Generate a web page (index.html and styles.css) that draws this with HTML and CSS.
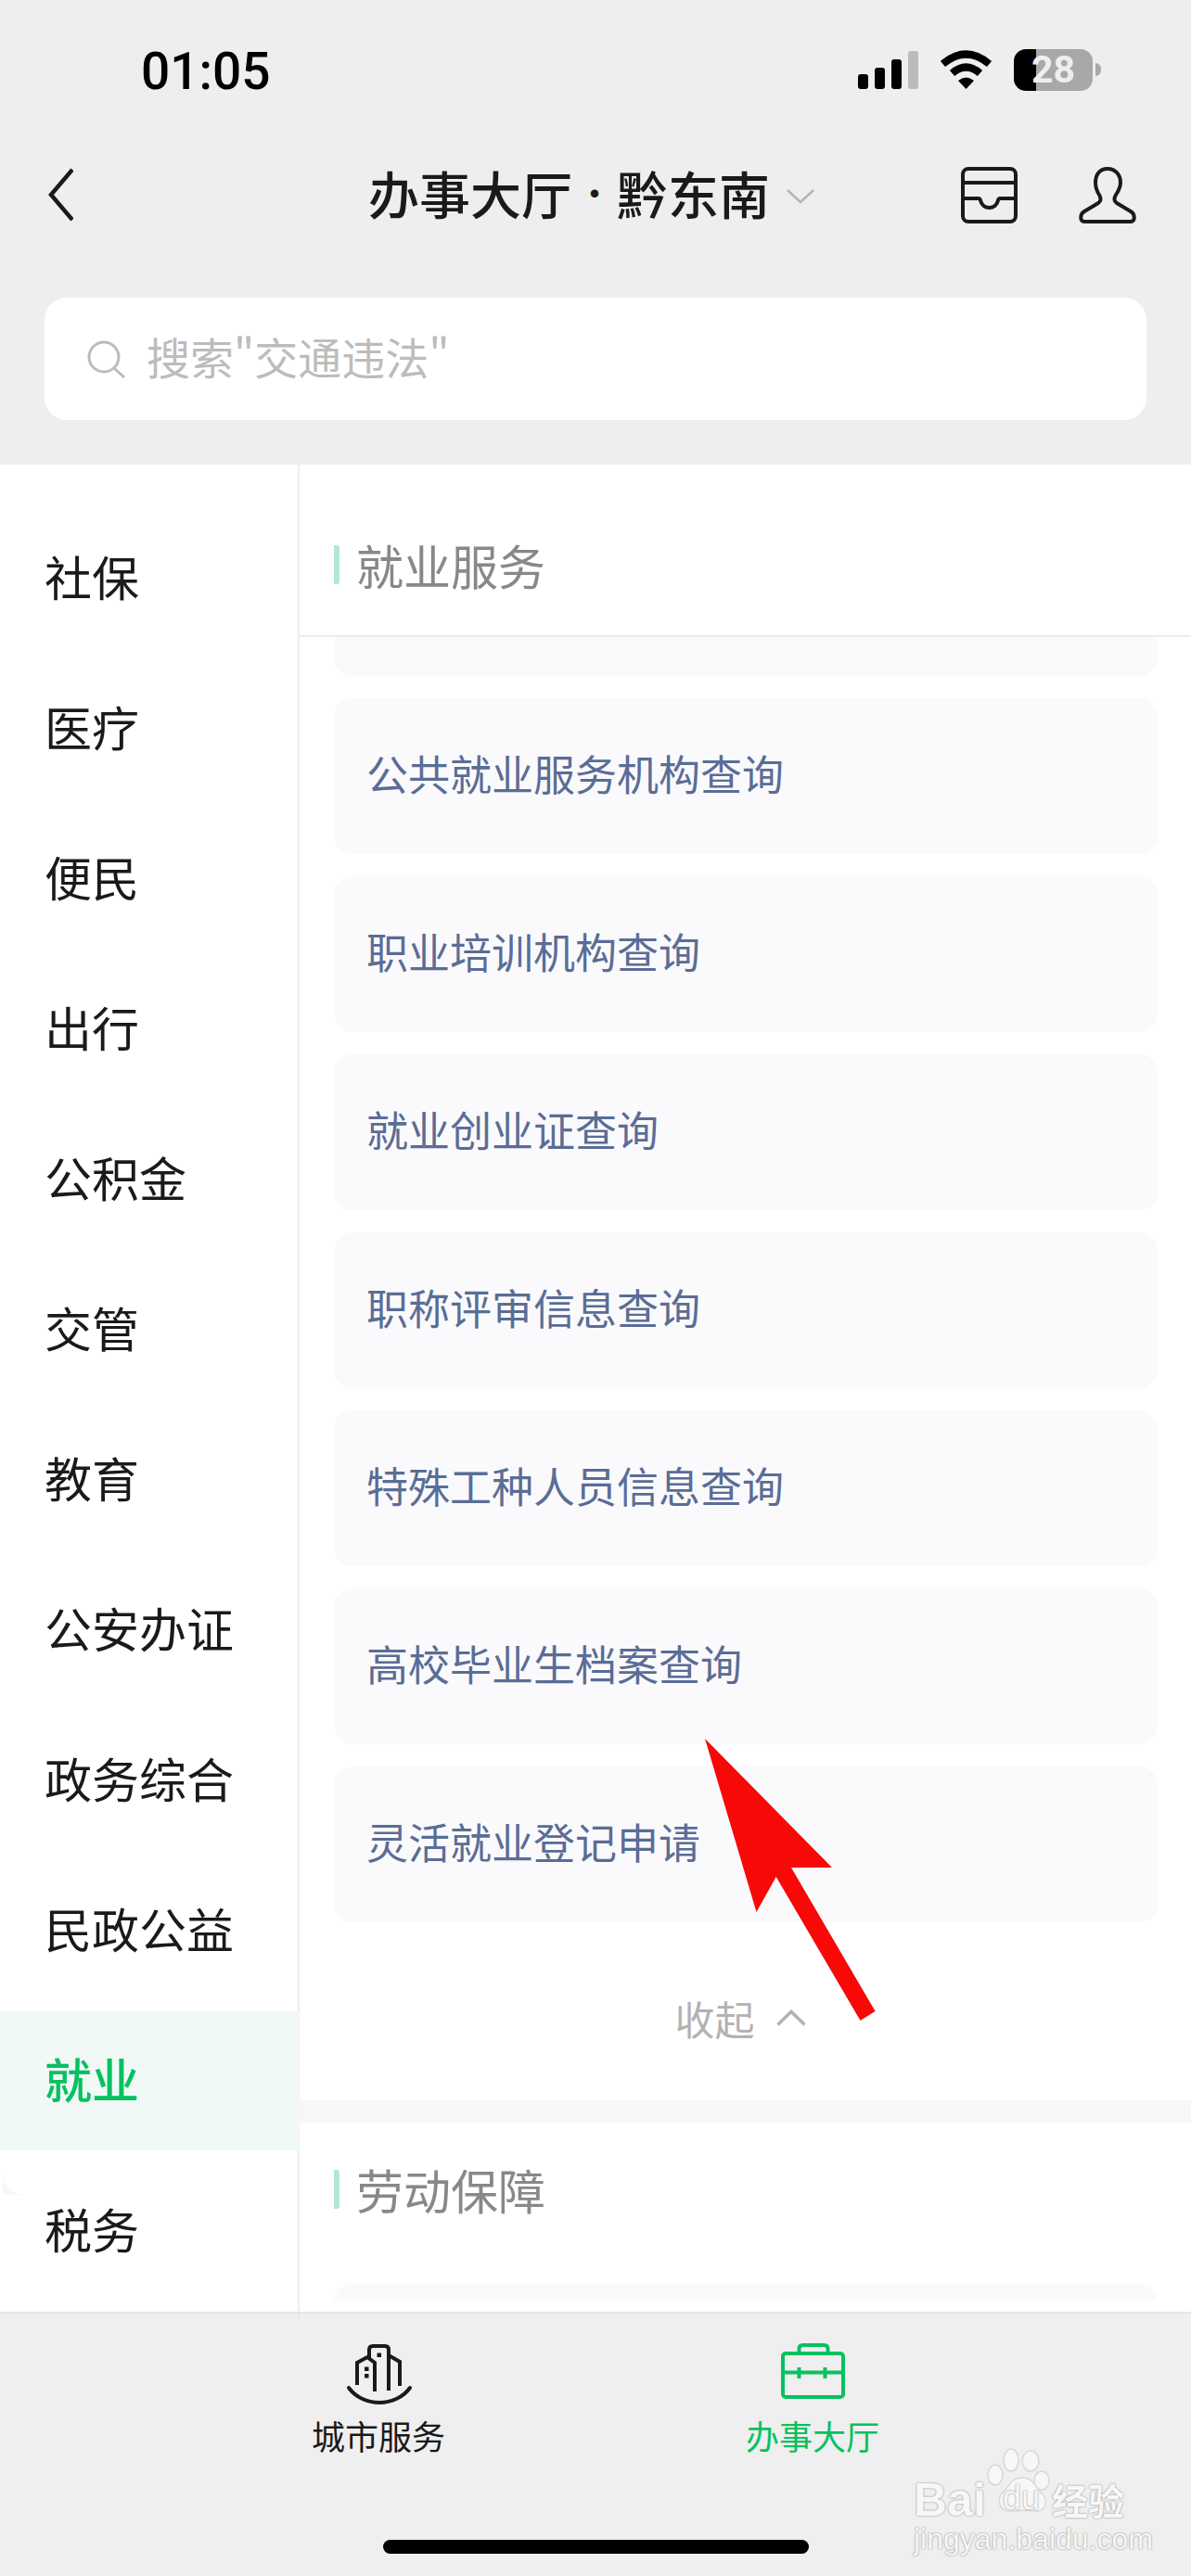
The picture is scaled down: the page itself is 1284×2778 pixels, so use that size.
FILE: index.html
```html
<!DOCTYPE html>
<html lang="zh-CN">
<head>
    <meta charset="UTF-8">
    <meta name="viewport" content="width=device-width, initial-scale=1.0">
    <title>办事大厅</title>
    <link rel="stylesheet" href="styles.css">
</head>
<body>
<div class="app">
    <header class="top">
        <div class="status">
            <span class="time">01:05</span>
            <div class="status-icons">
                <svg class="signal" width="65" height="41" viewBox="0 0 65 41">
                    <rect x="0" y="25" width="11" height="16" rx="3"/>
                    <rect x="18" y="18" width="11" height="23" rx="3"/>
                    <rect x="36" y="9" width="11" height="32" rx="3"/>
                    <rect x="54" y="0" width="11" height="41" rx="3" fill="#bbb"/>
                </svg>
                <svg class="wifi" width="57" height="42" viewBox="0 0 57 42">
                    <path d="M3.5 15 Q28.5 -6 53.5 15" fill="none" stroke="#000" stroke-width="8"/>
                    <path d="M13.5 25 Q28.5 12 43.5 25" fill="none" stroke="#000" stroke-width="8"/>
                    <path d="M28.5 42 L20 33 Q28.5 26 37 33 Z"/>
                </svg>
                <div class="battery">28</div>
            </div>
        </div>
        <nav class="nav">
            <svg class="back" width="32" height="60" viewBox="0 0 32 60">
                <path d="M31 3 L8 30 L31 57" fill="none" stroke="#1a1a1a" stroke-width="4.5"/>
            </svg>
            <div class="nav-title">
                <span>办事大厅</span><span class="dot">·</span><span>黔东南</span>
                <svg class="caret" width="30" height="16" viewBox="0 0 30 16">
                    <path d="M1 1 L15 14 L29 1" fill="none" stroke="#b5b5b5" stroke-width="2.5"/>
                </svg>
            </div>
            <div class="nav-icons">
                <svg width="61" height="61" viewBox="0 0 61 61" fill="none" stroke="#1a1a1a" stroke-width="4">
                    <rect x="2" y="2" width="57" height="57" rx="6"/>
                    <path d="M2 17 H59"/>
                    <path d="M2 34 H19 Q20.5 34 21 36 C22 41 26 44 30.5 44 C35 44 39 41 40 36 Q40.5 34 42 34 H59"/>
                </svg>
                <svg width="65" height="61" viewBox="0 0 65 61" fill="none" stroke="#1a1a1a" stroke-width="4">
                    <path d="M31 2 C22 2 18 9 18 17 C18 23 20 27 22.5 31 C24 34 24 37 21 39 L6 48 C1 51 1 59 6 59 H56 C61 59 61 51 56 48 L41 39 C38 37 38 34 39.5 31 C42 27 45 23 45 17 C45 9 40 2 31 2 Z"/>
                </svg>
            </div>
        </nav>
        <div class="search">
            <svg width="41" height="41" viewBox="0 0 41 41" fill="none" stroke="#bcbcbc" stroke-width="3">
                <circle cx="18" cy="18" r="16"/>
                <path d="M29 30 L40 40"/>
            </svg>
            <span class="search-text">搜索"交通违法"</span>
        </div>
    </header>

    <div class="content">
        <aside class="sidebar">
            <div class="side-item">社保</div>
            <div class="side-item">医疗</div>
            <div class="side-item">便民</div>
            <div class="side-item">出行</div>
            <div class="side-item">公积金</div>
            <div class="side-item">交管</div>
            <div class="side-item">教育</div>
            <div class="side-item">公安办证</div>
            <div class="side-item">政务综合</div>
            <div class="side-item">民政公益</div>
            <div class="side-item active">就业</div>
            <div class="side-item">税务</div>
        </aside>
        <main class="main">
            <div class="sec-head first"><i class="sec-bar"></i>就业服务</div>
            <div class="cards">
                <div class="card cut-top"></div>
                <div class="card">公共就业服务机构查询</div>
                <div class="card">职业培训机构查询</div>
                <div class="card">就业创业证查询</div>
                <div class="card">职称评审信息查询</div>
                <div class="card">特殊工种人员信息查询</div>
                <div class="card">高校毕业生档案查询</div>
                <div class="card">灵活就业登记申请</div>
            </div>
            <div class="collapse">
                <span>收起</span>
                <svg width="32" height="18" viewBox="0 0 32 18">
                    <path d="M1.5 16.5 L16 2.5 L30.5 16.5" fill="none" stroke="#b2b2b2" stroke-width="3.5"/>
                </svg>
            </div>
            <div class="band"></div>
            <div class="sec-head"><i class="sec-bar"></i>劳动保障</div>
            <div class="cards">
                <div class="card cut-bottom"></div>
            </div>
        </main>
    </div>

    <footer class="tabbar">
        <div class="tab">
            <svg width="120" height="100" viewBox="-3 0 120 100" fill="none" stroke="#1a1a1a" stroke-width="4">
                <path d="M34 62 V38 L45 32 L53 38 V69"/>
                <path d="M47 33 V24 Q47 20 51 20 H64 Q68 20 68 24 V68"/>
                <path d="M68 30 L80 37 V63"/>
                <path d="M25 65 C32 75 45 81 58 81 C71 81 84 75 91 65" stroke-linecap="round"/>
                <rect x="55.5" y="27.5" width="4.5" height="4.5" fill="#1a1a1a" stroke="none"/>
                <rect x="42" y="42.5" width="4.5" height="4.5" fill="#1a1a1a" stroke="none"/>
                <rect x="42" y="50" width="4.5" height="4.5" fill="#1a1a1a" stroke="none"/>
            </svg>
            <span>城市服务</span>
        </div>
        <div class="tab active">
            <svg width="120" height="100" viewBox="-4.5 0 120 100" fill="none" stroke="#07c160" stroke-width="4">
                <rect x="23.5" y="28" width="65" height="47" rx="3"/>
                <path d="M23.5 48.5 H88.5"/>
                <path d="M41 43 V55 M69 43 V55"/>
                <path d="M41 28 V23 Q41 19 45 19 H68 Q72 19 72 23 V28"/>
            </svg>
            <span>办事大厅</span>
        </div>
    </footer>
    <div class="home-bar"></div>

    <!-- red arrow drawn over the screenshot -->
    <svg class="arrow" width="184" height="304" viewBox="0 0 184 304">
        <path d="M0 0 L137 139 L93 139 L183.6 294 L167.5 304 L76.7 149 L55.5 187 Z" fill="#f90808"/>
    </svg>

    <!-- watermark -->
    <div class="mark">
        <svg class="paw" width="260" height="100" viewBox="0 0 260 100" fill="#f7f7f7" stroke="#d8d8d8" stroke-width="1.5">
            <ellipse cx="103" cy="49" rx="8" ry="11"/>
            <ellipse cx="120" cy="33" rx="8" ry="12"/>
            <ellipse cx="141" cy="34" rx="9" ry="11"/>
            <ellipse cx="153" cy="55" rx="8" ry="10"/>
            <path d="M132 52 C120 52 118 62 111 68 C105 74 106 88 118 88 C126 88 138 86 146 88 C158 89 160 76 154 70 C147 63 144 52 132 52 Z"/>
        </svg>
        <span class="mark-bai">Bai</span>
        <span class="mark-du">du</span>
        <span class="mark-cn">经验</span>
        <span class="mark-url">jingyan.baidu.com</span>
    </div>
</div>
</body>
</html>
```

FILE: styles.css
```css
* {
    box-sizing: border-box;
}
body {
    margin: 0;
    font-family: "Noto Sans CJK SC", "Liberation Sans", sans-serif;
    color: #1a1a1a;
    background-color: #fff;
}
.app {
    position: relative;
    width: 1284px;
    height: 2778px;
    overflow: hidden;
    display: flex;
    flex-direction: column;
}

/* top area */
.top {
    height: 501px;
    background-color: #eeeeee;
}
.status {
    height: 178px;
    padding: 53px 106px 0 152px;
    display: flex;
    justify-content: space-between;
    align-items: flex-start;
}
.time {
    font-family: Roboto, "Liberation Sans", sans-serif;
    font-weight: 500;
    font-size: 55px;
    line-height: 48px;
    color: #000;
}
.status-icons {
    display: flex;
    align-items: flex-start;
    gap: 23px;
}
.signal {
    margin-top: 2px;
}
.wifi {
    margin-top: 1px;
}
.battery {
    position: relative;
    width: 85px;
    height: 45px;
    border-radius: 13px;
    background: linear-gradient(90deg, #000 24px, #a8a8a8 24px);
    color: #eee;
    font-family: Roboto, "Liberation Sans", sans-serif;
    font-weight: 700;
    font-size: 41px;
    line-height: 45px;
    text-align: center;
}
.battery::after {
    content: "";
    position: absolute;
    left: 88px;
    top: 15px;
    width: 6px;
    height: 14px;
    border-radius: 0 7px 7px 0;
    background-color: #a8a8a8;
}
.nav {
    height: 64px;
    padding: 0 56px 0 47px;
    display: grid;
    grid-template-columns: 1fr auto 1fr;
    align-items: center;
}
.nav-title {
    display: flex;
    align-items: center;
    font-size: 55px;
    font-weight: 500;
    line-height: 58px;
    padding-bottom: 6px;
}
.dot {
    width: 48px;
    font-size: 40px;
    font-weight: 400;
    text-align: center;
}
.caret {
    margin-left: 18px;
    margin-top: 10px;
}
.nav-icons {
    display: flex;
    justify-content: flex-end;
    gap: 66px;
}
.search {
    height: 132px;
    margin: 79px 48px 0;
    padding-left: 46px;
    border-radius: 24px;
    background-color: #fff;
    display: flex;
    align-items: center;
    gap: 23px;
    font-size: 47px;
    color: #bcbcbc;
}
.search-text {
    line-height: 60px;
    padding-bottom: 6px;
}

/* middle */
.content {
    height: 1992px;
    display: flex;
}
.sidebar {
    position: relative;
    z-index: 1;
    width: 323px;
    padding-top: 48px;
    border-right: 2px solid #eeeeee;
    display: flex;
    flex-direction: column;
    gap: 12px;
}
.sidebar::after {
    content: "";
    position: absolute;
    right: -2px;
    bottom: -6px;
    width: 2px;
    height: 6px;
    background-color: #e4e4e4;
}
.side-item {
    position: relative;
    height: 150px;
    padding-left: 48px;
    margin-right: -2px;
    font-size: 51px;
    line-height: 145px;
}
.side-item.active {
    background-color: #f0f9f5;
    color: #07c160;
    font-weight: 500;
}
.side-item.active::before {
    content: "";
    position: absolute;
    left: 3px;
    top: 24px;
    width: 15px;
    height: 14px;
    background: radial-gradient(circle at 100% 100%, transparent 14px, #f7f7f7 15px);
}
.side-item.active::after {
    content: "";
    position: absolute;
    left: 3px;
    bottom: -48px;
    width: 22px;
    height: 22px;
    background: radial-gradient(circle at 100% 0, transparent 21px, #f7f7f7 22px);
}
.main {
    flex: 1;
    overflow: hidden;
}
.sec-head {
    display: flex;
    align-items: center;
    gap: 18px;
    height: 144px;
    padding-left: 37px;
    font-size: 51px;
    line-height: 60px;
    color: #888;
}
.sec-head.first {
    height: 186px;
    padding-top: 32px;
    border-bottom: 2px solid #ececec;
}
.sec-bar {
    width: 6px;
    height: 42px;
    border-radius: 0 3px 3px 0;
    background-color: #b2e8cf;
}
.cards {
    padding: 0 36px 0 37px;
    display: flex;
    flex-direction: column;
    gap: 24px;
}
.card {
    height: 168px;
    padding-left: 35px;
    border-radius: 20px;
    background-color: #fafafc;
    color: #5a6d96;
    font-size: 45px;
    line-height: 161px;
}
.card.cut-top {
    height: 42px;
    border-radius: 0 0 20px 20px;
}
.card.cut-bottom {
    height: 18px;
    margin-top: 30px;
    border-radius: 20px 20px 0 0;
}
.collapse {
    height: 192px;
    padding: 13px 11px 0 0;
    display: flex;
    justify-content: center;
    align-items: center;
    gap: 23px;
    font-size: 43px;
    color: #b2b2b2;
}
.band {
    height: 24px;
    background-color: #f7f7f7;
}

/* tabs */
.tabbar {
    flex: 1;
    padding-top: 15px;
    border-top: 2px solid #e5e5e5;
    background-color: #efefef;
    display: flex;
    justify-content: center;
}
.tab {
    width: 468px;
    display: flex;
    flex-direction: column;
    align-items: center;
    font-size: 36px;
    line-height: 40px;
}
.tab span {
    margin-top: -4px;
}
.tab.active {
    color: #07c160;
}
.home-bar {
    position: absolute;
    left: 413px;
    top: 2739px;
    width: 459px;
    height: 15px;
    border-radius: 8px;
    background-color: #000;
}

/* overlays */
.arrow {
    position: absolute;
    left: 760px;
    top: 1875px;
}
.mark {
    position: absolute;
    left: 970px;
    top: 2620px;
    width: 260px;
    height: 150px;
    color: #f7f7f7;
    font-family: "Liberation Sans", sans-serif;
    text-shadow: 0 0 2px rgba(0, 0, 0, 0.5);
}
.mark span {
    position: absolute;
    white-space: nowrap;
}
.paw {
    position: absolute;
    left: 0;
    top: 0;
}
.mark-bai {
    left: 15px;
    top: 46px;
    font-size: 50px;
    font-weight: 700;
    line-height: 60px;
}
.mark-du {
    left: 111px;
    top: 56px;
    font-size: 36px;
    line-height: 36px;
}
.mark-cn {
    left: 164px;
    top: 50px;
    font-family: "Noto Sans CJK SC", sans-serif;
    font-size: 39px;
    font-weight: 700;
    line-height: 50px;
}
.mark-url {
    left: 15px;
    top: 100px;
    font-size: 32px;
    line-height: 36px;
}
```
